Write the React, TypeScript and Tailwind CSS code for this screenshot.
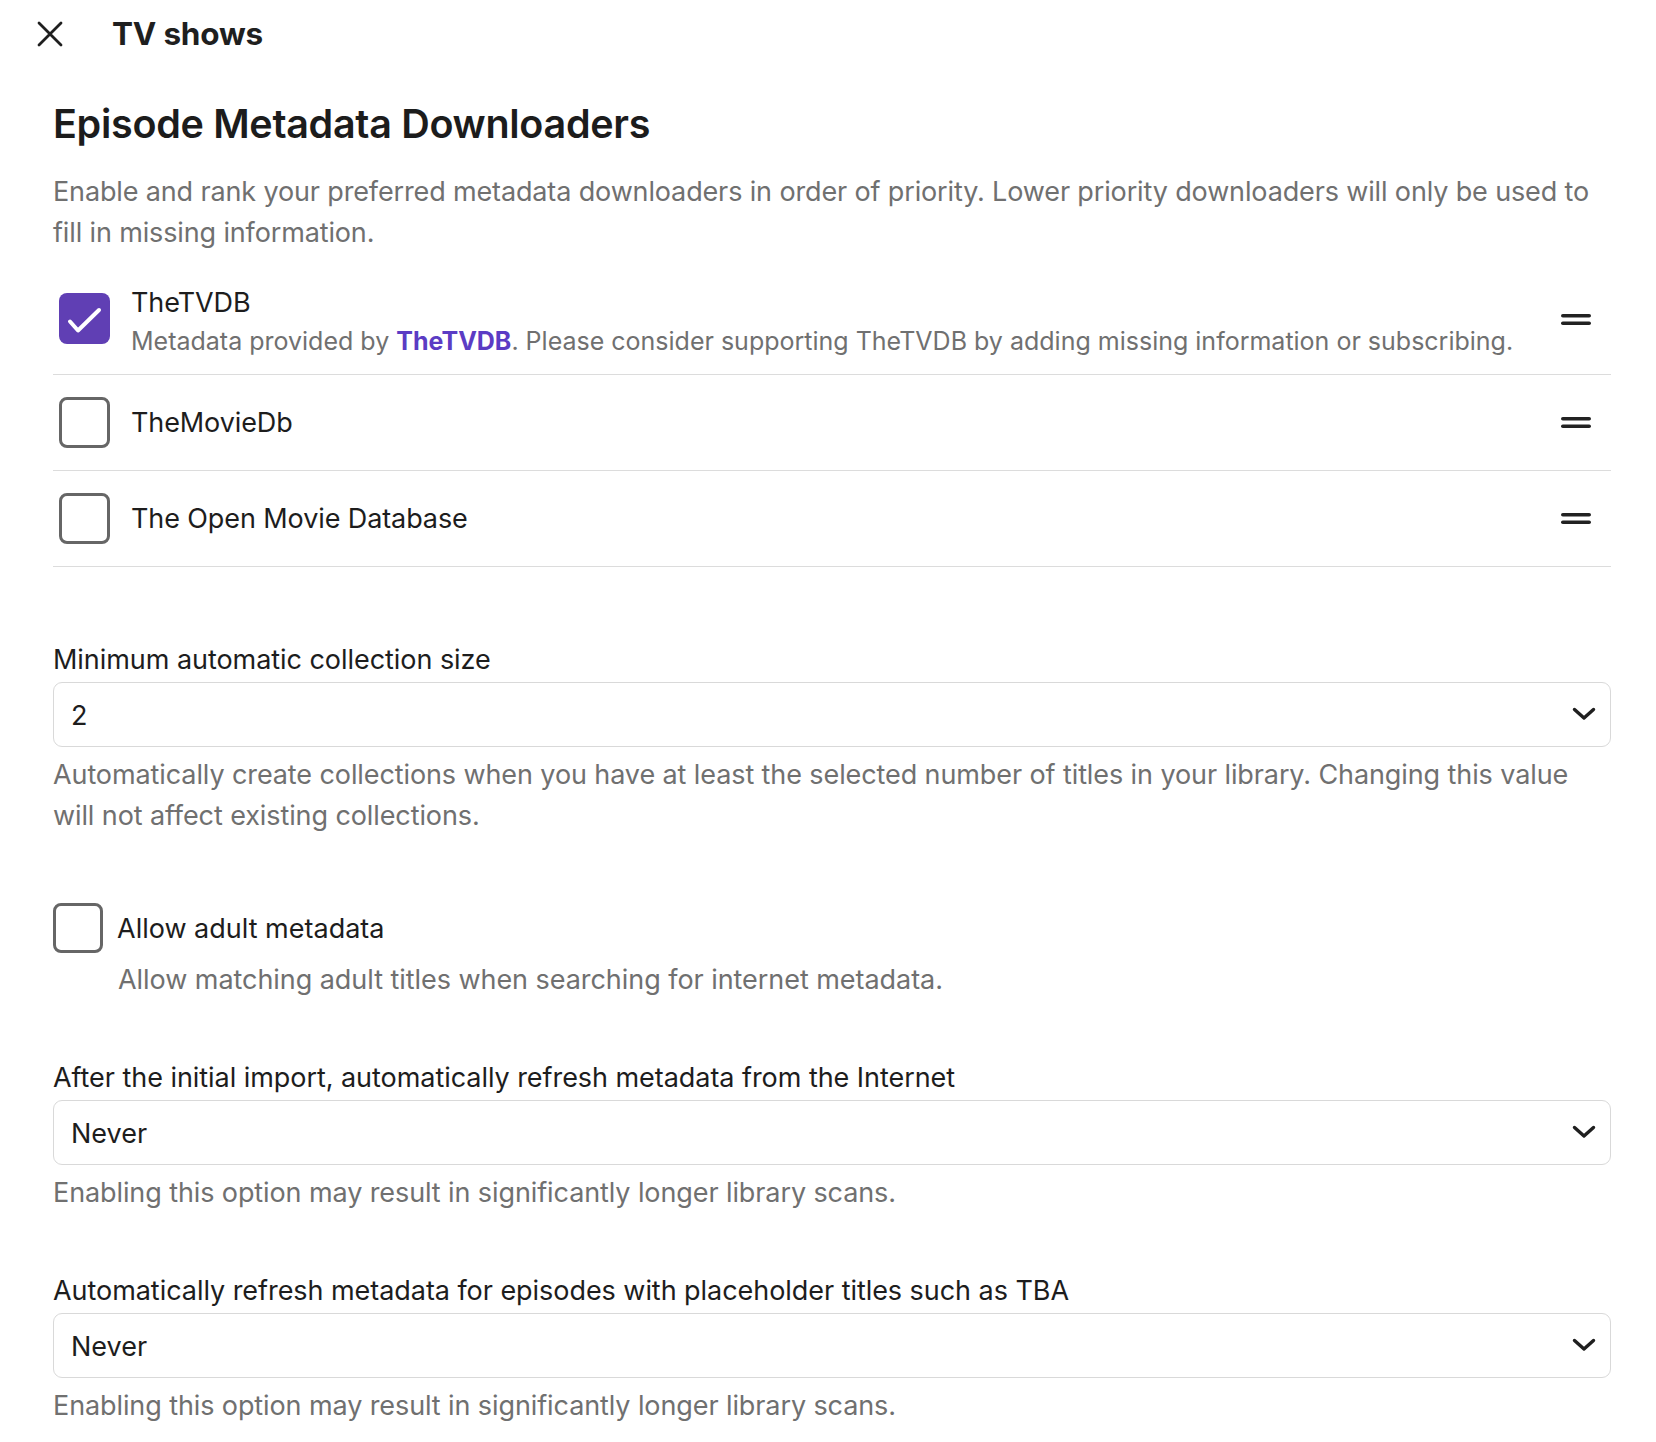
import React from "react";

function CloseIcon() {
  return (
    <svg width="26" height="26" viewBox="0 0 26 26" fill="none" stroke="#1f1f1f" strokeWidth="2.8" strokeLinecap="round">
      <path d="M2 2 L24 24 M24 2 L2 24" />
    </svg>
  );
}

function Handle() {
  return (
    <svg width="30" height="11" viewBox="0 0 30 11" fill="#222222">
      <rect x="0" y="0" width="30" height="3.6" rx="1.8" />
      <rect x="0" y="7.4" width="30" height="3.6" rx="1.8" />
    </svg>
  );
}

function Chevron() {
  return (
    <svg width="24" height="14" viewBox="0 0 24 14" fill="none" stroke="#1f1f1f" strokeWidth="3.4" strokeLinecap="round" strokeLinejoin="round">
      <path d="M2.5 2.5 L12 11 L21.5 2.5" />
    </svg>
  );
}

function Checkbox({ checked, size = 51 }: { checked?: boolean; size?: number }) {
  if (checked) {
    return (
      <div className="flex size-[51px] shrink-0 items-center justify-center rounded-[8px] bg-[#603fb4]">
        <svg width="51" height="51" viewBox="0 0 51 51" fill="none" stroke="#ffffff" strokeWidth="4" strokeLinecap="round" strokeLinejoin="round">
          <path d="M11 28.5 L19 37.5 L40 17" />
        </svg>
      </div>
    );
  }
  return size === 51 ? (
    <div className="size-[51px] shrink-0 rounded-[8px] border-[3px] border-[#666666] bg-white" />
  ) : (
    <div className="size-[50px] shrink-0 rounded-[8px] border-[3px] border-[#666666] bg-white" />
  );
}

function SelectField({ label, value, help, first }: { label: string; value: string; help: React.ReactNode; first?: boolean }) {
  return (
    <div className={first ? "mt-[73px]" : "mt-[58px]"}>
      <div className="text-[27px] leading-[39px] tracking-[-0.05px] text-[#1d1d1d]">{label}</div>
      <div className="mt-[3px] flex h-[65px] items-center justify-between rounded-[9px] border border-[#d9d9d9] bg-white pl-[17px] pr-[14px]">
        <span className="pt-[3px] text-[27px] text-[#1d1d1d]">{value}</span>
        <span className="mb-[2px]">
          <Chevron />
        </span>
      </div>
      <p className="mt-[7px] text-[27px] leading-[41px] tracking-[-0.1px] text-[#707070]">{help}</p>
    </div>
  );
}

export default function App() {
  return (
    <div className="min-h-screen bg-white font-[Inter,'Noto_Sans',sans-serif] text-[#1d1d1d]">
      <header className="flex h-[68px] items-center pl-[37px]">
        <CloseIcon />
        <span className="ml-[49px] text-[31.5px] font-bold tracking-[-0.2px] text-[#1f1f1f]">TV shows</span>
      </header>
      <main className="pl-[53px] pr-[45px] pb-[20px]">
        <h1 className="mt-[28px] text-[39.5px] font-semibold leading-[56px] tracking-[-0.3px] text-[#1c1c1c]">
          Episode Metadata Downloaders
        </h1>
        <p className="mt-[19px] text-[27px] leading-[41px] tracking-[-0.14px] text-[#707070]">
          Enable and rank your preferred metadata downloaders in order of priority. Lower priority downloaders will only be used to fill in missing information.
        </p>
        <ul className="mt-[11px]">
          <li className="flex items-center border-b border-[#dcdcdc] pt-[15px] pb-[13px]">
            <div className="ml-[6px] mb-[4px]">
              <Checkbox checked />
            </div>
            <div className="ml-[21px] flex-1 pt-[4px]">
              <div className="text-[27px] leading-[39px] tracking-[-0.1px] text-[#1d1d1d]">TheTVDB</div>
              <div className="text-[25px] leading-[39px] text-[#707070]">
                Metadata provided by <span className="font-bold text-[#5b3cc4]">TheTVDB</span>. Please consider supporting TheTVDB by adding missing information or subscribing.
              </div>
            </div>
            <div className="mr-[20px] mb-[2px]">
              <Handle />
            </div>
          </li>
          <li className="flex items-center border-b border-[#dcdcdc] py-[22px]">
            <div className="ml-[6px]">
              <Checkbox />
            </div>
            <div className="ml-[21px] flex-1 text-[27px] leading-[39px] tracking-[-0.1px] text-[#1d1d1d]">TheMovieDb</div>
            <div className="mr-[20px]">
              <Handle />
            </div>
          </li>
          <li className="flex items-center border-b border-[#dcdcdc] py-[22px]">
            <div className="ml-[6px]">
              <Checkbox />
            </div>
            <div className="ml-[21px] flex-1 text-[27px] leading-[39px] tracking-[-0.1px] text-[#1d1d1d]">The Open Movie Database</div>
            <div className="mr-[20px]">
              <Handle />
            </div>
          </li>
        </ul>

        <SelectField
          first
          label="Minimum automatic collection size"
          value="2"
          help="Automatically create collections when you have at least the selected number of titles in your library. Changing this value will not affect existing collections."
        />

        <div className="mt-[67px]">
          <div className="flex items-center">
            <Checkbox size={50} />
            <span className="ml-[14px] text-[27px] leading-[39px] text-[#1d1d1d]">Allow adult metadata</span>
          </div>
          <p className="ml-[65px] mt-[6px] text-[27px] leading-[41px] tracking-[-0.05px] text-[#707070]">
            Allow matching adult titles when searching for internet metadata.
          </p>
        </div>

        <SelectField
          label="After the initial import, automatically refresh metadata from the Internet"
          value="Never"
          help="Enabling this option may result in significantly longer library scans."
        />
        <SelectField
          label="Automatically refresh metadata for episodes with placeholder titles such as TBA"
          value="Never"
          help="Enabling this option may result in significantly longer library scans."
        />
      </main>
    </div>
  );
}
